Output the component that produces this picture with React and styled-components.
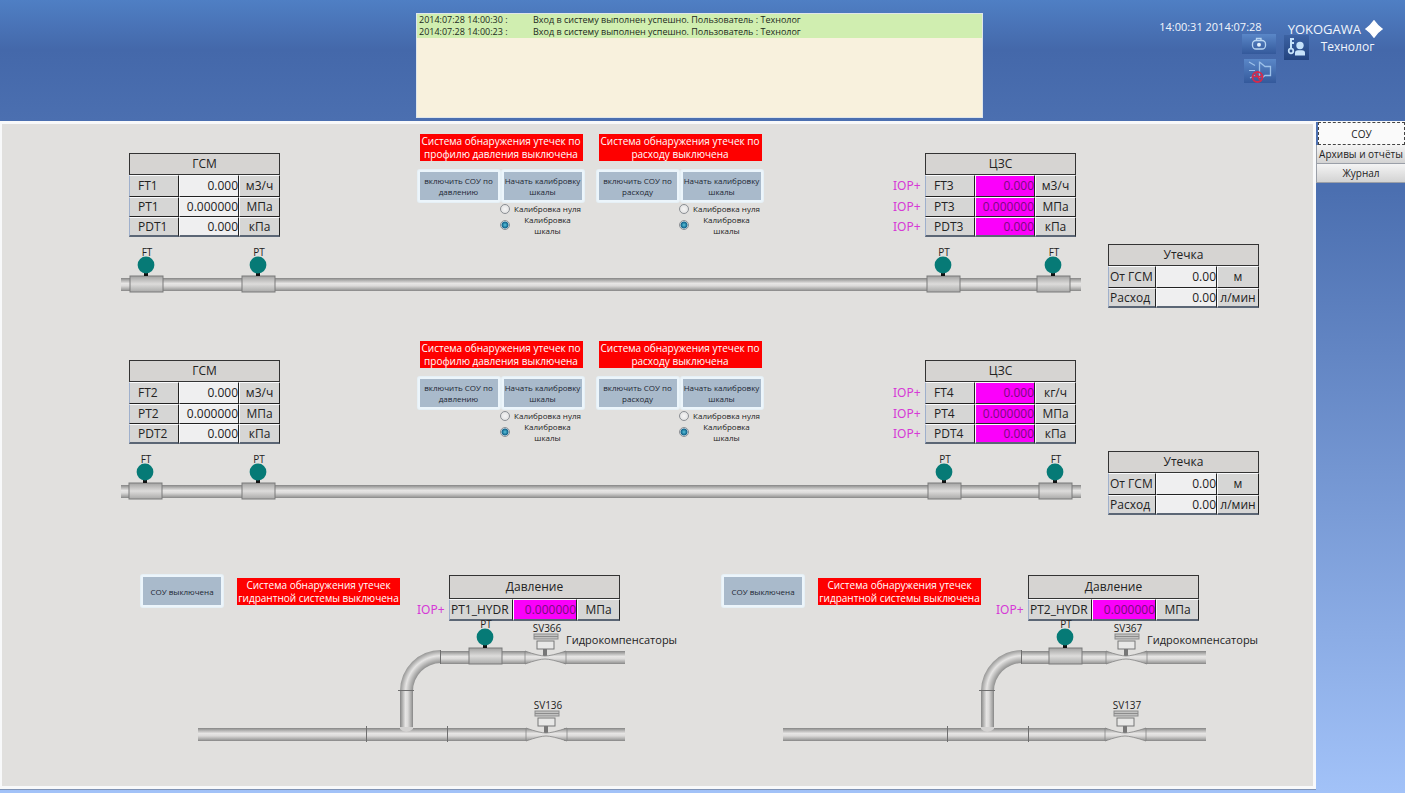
import React, { useState } from "react";
import styled, { createGlobalStyle, css } from "styled-components";

const GlobalStyle = createGlobalStyle`
  * {
    box-sizing: border-box;
  }
  body {
    margin: 0;
    font-family: "Open Sans", "Noto Sans", sans-serif;
    font-size: 12px;
    color: #222;
  }
  button, input {
    font-family: inherit;
  }
`;

const Page = styled.div`
  display: grid;
  grid-template-rows: 121px 1fr;
  min-height: 100vh;
  background: linear-gradient(#4f7fc4 0, #4468aa 50px, #4b6fb0 120px, #4b6fb0 190px, #a2c2f8 100%);
`;

const Header = styled.header`
  display: grid;
  grid-template-columns: 416fr 567px 422fr;
`;

const Log = styled.ul`
  grid-column: 2;
  margin: 13px 0 3px;
  padding: 0;
  list-style: none;
  background: #f8f1dd;
  border: 1px solid #dfe6ea;
  font-size: 9px;
`;

const LogRow = styled.li`
  display: flex;
  height: 12px;
  padding-left: 2px;
  line-height: 11px;
  background: #d0eeb0;
  color: #1c2a1c;
`;

const LogTime = styled.time`
  width: 114px;
`;

const HeaderTools = styled.div`
  display: flex;
  justify-content: flex-end;
  gap: 8px;
  padding: 20px 22px 0 0;
  color: #f2f6fc;
`;

const ToolColumn = styled.div`
  display: flex;
  flex-direction: column;
  align-items: flex-end;
`;

const Clock = styled.time`
  padding-right: 14px;
  font-size: 11px;
  line-height: 14px;
`;

const IconButton = styled.button`
  display: flex;
  align-items: center;
  justify-content: center;
  width: ${(p) => p.$w}px;
  height: ${(p) => p.$h}px;
  margin: 0 0 5px;
  padding: 0;
  border: 0;
  background: ${(p) => (p.$dark ? "linear-gradient(#3c62a3, #23447f)" : "linear-gradient(#5a87c8, #34599b)")};
  cursor: pointer;
`;

const Brand = styled.div`
  display: flex;
  align-items: center;
  gap: 4px;
  height: 15px;
  padding: 2px 0 0 4px;
  font-size: 13px;
`;

const UserRow = styled.div`
  display: flex;
  align-items: flex-start;
  gap: 12px;
  font-size: 12px;
  line-height: 24px;
`;

const Body = styled.div`
  display: flex;
`;

const Main = styled.main`
  flex: 1;
  margin-bottom: 4px;
  padding: 10px 54px 0 119px;
  border: solid #f8f9fa;
  border-width: 3px 3px 3px 2px;
  background: #e1e0de;
  box-shadow: 0 1px 0 #7f93b5;
`;

const Nav = styled.nav`
  display: flex;
  flex-direction: column;
  width: 89px;
  border-top: 1px solid #f8f9fa;
`;

const NavButton = styled.button`
  height: ${(p) => (p.$active ? 23 : 19)}px;
  padding: 0;
  border: 1px solid #9a9fa8;
  border-width: 0 0 1px 1px;
  background: linear-gradient(#f4f4f4, #d3d3d3);
  font-size: 10px;
  line-height: 16px;
  color: #222;
  white-space: nowrap;
  cursor: pointer;
  ${(p) =>
    p.$active &&
    css`
      margin: 0 0 0 2px;
      border: 1px dashed #444;
      background: #fafafa;
    `}
`;

const Line = styled.section`
  display: flex;
  gap: 27px;
  margin-bottom: 33px;
`;

const LineMain = styled.div`
  flex: 1;
`;

const LineTop = styled.div`
  display: grid;
  grid-template-columns: 151px 1fr 183px;
  height: 103px;
  padding: 0 5px 0 8px;
`;

const TableSlot = styled.div`
  padding-top: ${(p) => p.$top || 0}px;
`;

const Controls = styled.div`
  display: flex;
  justify-content: center;
  gap: 13px;
  padding-left: 7px;
`;

const Panel = styled.div`
  width: 166px;
`;

const Banner = styled.div`
  width: 163px;
  height: 27px;
  margin: ${(p) => p.$margin};
  background: #fe0000;
  color: #fff;
  font-size: 10px;
  line-height: 13px;
  text-align: center;
  white-space: pre-line;
  padding-top: 1px;
`;

const ButtonRow = styled.div`
  display: flex;
  gap: 2px;
`;

const PanelButton = styled.button`
  width: 82px;
  height: 32px;
  padding: 0;
  border: 2px solid #ecf5fb;
  border-radius: 2px;
  background: #a9bacb;
  box-shadow: 0 0 0 1px #e6f0f6;
  color: #1d2733;
  font-size: 8px;
  line-height: 11px;
  cursor: pointer;
`;

const RadioGroup = styled.fieldset`
  margin: 1px 0 0 82px;
  padding: 0 2px 0 0;
  border: 0;
`;

const RadioLabel = styled.label`
  display: flex;
  align-items: center;
  gap: 4px;
  font-size: 8px;
  line-height: 11px;
  text-align: center;
  white-space: pre;

  span {
    flex: 1;
  }
`;

const Radio = styled.input`
  appearance: none;
  width: 10px;
  height: 10px;
  margin: 0;
  border: 1px solid #8b8f94;
  border-radius: 50%;
  background: radial-gradient(#f5f5f5, #dcdcdc);

  &:checked {
    background: radial-gradient(#58c4dc 0, #12648c 3px, #e8eef2 4px);
  }
`;

const DataTable = styled.table`
  border-spacing: 0;
  table-layout: fixed;
  width: ${(p) => p.$width}px;
  line-height: 16px;
`;

const TitleCell = styled.th`
  height: ${(p) => (p.$tall ? 24 : 22)}px;
  padding: 0;
  border: 1px solid #333;
  background: #d6d4d2;
  font-weight: 400;
`;

const cell = css`
  height: 20px;
  padding: 0;
  border: 1px solid #fafbfd;
  border-right-color: #222;
  border-bottom-color: #222;
  background: #d6d6d5;
  font-weight: 400;
  white-space: nowrap;

  tr:first-child > & {
    height: 22px;
  }
  tr:last-child > & {
    border-bottom: 2px solid #5b6675;
  }
`;

const NameCell = styled.th`
  ${cell}
  padding-left: ${(p) => (p.$indent ? 8 : 1)}px;
  border-left: 1px solid #9fb0cc;
  text-align: left;
`;

const ValueCell = styled.td`
  ${cell}
  text-align: right;
  background: ${(p) => (p.$alarm ? "#fb00fb" : "#efeff0")};
  color: ${(p) => (p.$alarm ? "#780c7c" : "#222")};
`;

const UnitCell = styled.td`
  ${cell}
  text-align: center;
`;

const AlarmCell = styled.td`
  padding: 0;
  color: #d63ad6;
  font-family: "Noto Sans", sans-serif;
`;

const Drawing = styled.svg`
  display: block;
  width: ${(p) => p.$width || "100%"};
  height: auto;
  margin: ${(p) => p.$margin};
  overflow: visible;
`;

const Defs = styled.svg`
  display: block;
  width: 0;
  height: 0;
`;

const SvgText = styled.text`
  font-size: ${(p) => p.$size || 10}px;
  text-anchor: ${(p) => p.$anchor || "middle"};
  fill: #222;
`;

const Hydro = styled.section`
  display: grid;
  grid-template-columns: 1fr 1fr;
  gap: 46px;
  margin: 60px 2px 0 20px;
`;

const HydroHead = styled.div`
  display: flex;
  align-items: flex-start;
  padding-right: ${(p) => p.$right}px;
`;

const HydroTable = styled.div`
  margin-left: auto;
`;

const DataBlock = ({ title, rows, cols, alarm, indent, tall }) => {
  const width = cols.reduce((a, b) => a + b, 0) + (alarm ? 32 : 0);
  return (
    <DataTable $width={width}>
      <colgroup>
        {alarm && <col width="32" />}
        {cols.map((w, i) => (
          <col key={i} width={w} />
        ))}
      </colgroup>
      <thead>
        <tr>
          {alarm && <td />}
          <TitleCell colSpan={3} $tall={tall}>{title}</TitleCell>
        </tr>
      </thead>
      <tbody>
        {rows.map(([name, value, unit]) => (
          <tr key={name}>
            {alarm && <AlarmCell>IOP+</AlarmCell>}
            <NameCell scope="row" $indent={indent}>{name}</NameCell>
            <ValueCell $alarm={alarm}>{value}</ValueCell>
            <UnitCell>{unit}</UnitCell>
          </tr>
        ))}
      </tbody>
    </DataTable>
  );
};

const ControlPanel = ({ id, status, action }) => {
  const [mode, setMode] = useState("scale");
  return (
    <Panel>
      <Banner $margin="0 0 9px 2px">{status}</Banner>
      <ButtonRow>
        <PanelButton>{action}</PanelButton>
        <PanelButton>Начать калибровку шкалы</PanelButton>
      </ButtonRow>
      <RadioGroup>
        <RadioLabel>
          <Radio type="radio" name={id} checked={mode === "zero"} onChange={() => setMode("zero")} />
          <span>Калибровка нуля</span>
        </RadioLabel>
        <RadioLabel>
          <Radio type="radio" name={id} checked={mode === "scale"} onChange={() => setMode("scale")} />
          <span>{"Калибровка\nшкалы"}</span>
        </RadioLabel>
      </RadioGroup>
    </Panel>
  );
};

const stops = (
  <>
    <stop offset="0" stopColor="#858585" />
    <stop offset="0.12" stopColor="#a2a2a1" />
    <stop offset="0.42" stopColor="#e6e5e4" />
    <stop offset="0.6" stopColor="#dcdbda" />
    <stop offset="0.9" stopColor="#a0a09f" />
    <stop offset="1" stopColor="#858585" />
  </>
);

const PipeDefs = () => (
  <Defs aria-hidden="true">
    <defs>
      <linearGradient id="pipeH" x1="0" y1="0" x2="0" y2="1">{stops}</linearGradient>
      <linearGradient id="pipeV" x1="0" y1="0" x2="1" y2="0">{stops}</linearGradient>
      <linearGradient id="fitting" x1="0" y1="0" x2="0" y2="1">
        <stop offset="0" stopColor="#a3a3a2" />
        <stop offset="0.5" stopColor="#dddcdb" />
        <stop offset="1" stopColor="#a9a9a8" />
      </linearGradient>
      {/* outer radius 41, inner radius 28 */}
      <radialGradient id="bend" gradientUnits="userSpaceOnUse" cx="243" cy="70" r="42">
        <stop offset="0.64" stopColor="#858585" />
        <stop offset="0.7" stopColor="#a2a2a1" />
        <stop offset="0.84" stopColor="#e6e5e4" />
        <stop offset="0.96" stopColor="#a0a09f" />
        <stop offset="1" stopColor="#858585" />
      </radialGradient>
    </defs>
  </Defs>
);

const Sensor = ({ x, y, label }) => (
  <g>
    <rect x={x - 16} y={y + 11} width="33" height="16" fill="url(#fitting)" stroke="#7a7a7a" />
    <rect x={x - 2} y={y + 7} width="4" height="4" fill="#111" />
    <circle cx={x} cy={y} r="8.4" fill="#067a76" />
    <SvgText x={x + 1} y={y - 9}>{label}</SvgText>
  </g>
);

const Valve = ({ x, y, label }) => (
  <g>
    <SvgText x={x + 2} y={y - 25}>{label}</SvgText>
    <rect x={x - 11} y={y - 23} width="24" height="5" fill="#c2c2c1" stroke="#8b8b8b" />
    <path d={`M${x - 11} ${y - 20.5}h24`} stroke="#8b8b8b" />
    <rect x={x - 8} y={y - 16} width="17" height="8" fill="#e8e8e7" stroke="#777" />
    <rect x={x - 2} y={y - 8} width="4" height="8" fill="#777" />
    <path
      d={`M${x - 20} ${y - 6}Q${x - 6} ${y - 1} ${x} ${y - 1}T${x + 21} ${y - 6}V${y + 7}Q${x + 6} ${y + 2} ${x} ${y + 2}T${x - 20} ${y + 7}Z`}
      fill="url(#pipeH)"
      stroke="#858585"
      strokeWidth="0.8"
    />
  </g>
);

const Pipeline = ({ sensors }) => (
  <Drawing viewBox="0 0 960 48" $margin="9px 0 0">
    <rect x="0" y="32" width="960" height="13" fill="url(#pipeH)" />
    {sensors.map(([x, label]) => (
      <Sensor key={x} x={x} y={19} label={label} />
    ))}
  </Drawing>
);

const HydroPipes = ({ start, shift, valves }) => (
  <Drawing viewBox="0 0 478 124" $margin="0 0 0 57px" $width="calc(100% - 57px)">
    <rect x="242" y="30" width="86" height="13" fill="url(#pipeH)" />
    <rect x="366" y="30" width="61" height="13" fill="url(#pipeH)" />
    <path d="M243 29A41 41 0 0 0 202 70H215A28 28 0 0 1 243 42Z" fill="url(#bend)" />
    <rect x="202" y="69" width="13" height="39" fill="url(#pipeV)" />
    <rect x={start} y="107" width={328 - start} height="13" fill="url(#pipeH)" />
    <rect x="366" y="107" width="61" height="13" fill="url(#pipeH)" />
    <path d="M202 106H215V108Q208 114 202 108Z" fill="#d3d2d1" />
    <path d="M242.5 29V43M200 69.5H216M168.5 105V121M249.5 105V121" stroke="#6f6f6f" />
    <Sensor x={287 - shift} y={16} label="PT" />
    <Valve x={347} y={36} label={valves[0]} />
    <Valve x={348 - shift * 2} y={113} label={valves[1]} />
    <SvgText x="368" y="23" $anchor="start" $size={11}>Гидрокомпенсаторы</SvgText>
  </Drawing>
);

const lines = [
  {
    n: 1,
    left: [["FT1", "0.000", "м3/ч"], ["PT1", "0.000000", "МПа"], ["PDT1", "0.000", "кПа"]],
    right: [["FT3", "0.000", "м3/ч"], ["PT3", "0.000000", "МПа"], ["PDT3", "0.000", "кПа"]],
    sensors: [[25, "FT"], [137, "PT"], [822, "PT"], [932, "FT"]],
  },
  {
    n: 2,
    left: [["FT2", "0.000", "м3/ч"], ["PT2", "0.000000", "МПа"], ["PDT2", "0.000", "кПа"]],
    right: [["FT4", "0.000", "кг/ч"], ["PT4", "0.000000", "МПа"], ["PDT4", "0.000", "кПа"]],
    sensors: [[24, "FT"], [137, "PT"], [823, "PT"], [934, "FT"]],
  },
];

const hydro = [
  { name: "PT1_HYDR", start: 0, shift: 0, right: 56, valves: ["SV366", "SV136"] },
  { name: "PT2_HYDR", start: 4, shift: 1, right: 58, valves: ["SV367", "SV137"] },
];

const log = ["2014:07:28 14:00:30 :", "2014:07:28 14:00:23 :"];

const CameraIcon = () => (
  <svg width="16" height="14" viewBox="0 0 16 14" fill="none" stroke="#b9d6f2" strokeWidth="1.3">
    <rect x="1.5" y="3.5" width="13" height="8.5" rx="3.5" />
    <path d="M5.5 3.5V1.5H10V3.5" />
    <circle cx="8" cy="7.7" r="2" fill="#e4f1fc" stroke="none" />
  </svg>
);

const SoundIcon = () => (
  <svg width="28" height="24" viewBox="0 0 28 24" fill="none">
    <path d="M13.5 2.5V19M13.500 3L19 7.500H24.500V16.500H19L16 19" stroke="#9cc0e8" strokeWidth="1.3" />
    <path d="M3 3L9 6.500M3 11.500H9M4 19L9 16.500" stroke="#9cc0e8" strokeWidth="1.2" />
    <circle cx="11.500" cy="18" r="5" stroke="#d42a4c" strokeWidth="1.8" />
    <path d="M7 17.500H16M10 14.500L14 21" stroke="#d42a4c" strokeWidth="1.6" />
  </svg>
);

const UserKeyIcon = () => (
  <svg width="21" height="21" viewBox="0 0 21 21" fill="#c6e2fa">
    <circle cx="5" cy="14" r="2.3" fill="none" stroke="#c6e2fa" strokeWidth="1.7" />
    <path d="M4 1H8V3H6V5H8V7H6V12H4Z" />
    <circle cx="14" cy="8.5" r="3.7" />
    <path d="M9 18.500V16Q9 13.300 12 13.300H16Q19 13.300 19 16V18.500Z" />
  </svg>
);

const App = () => {
  return (
    <Page>
      <GlobalStyle />
      <Header>
        <Log>
          {log.map((time) => (
            <LogRow key={time}>
              <LogTime>{time}</LogTime>
              <span>Вход в систему выполнен успешно. Пользователь : Технолог</span>
            </LogRow>
          ))}
        </Log>
        <HeaderTools>
          <ToolColumn>
            <Clock>14:00:31 2014:07:28</Clock>
            <IconButton $w={34} $h={20} aria-label="Снимок экрана"><CameraIcon /></IconButton>
            <IconButton $w={32} $h={24} aria-label="Отключить звук"><SoundIcon /></IconButton>
          </ToolColumn>
          <div>
            <Brand>
              YOKOGAWA
              <svg width="18" height="18" viewBox="0 0 18 18" aria-hidden="true">
                <path d="M9 1Q12 5.500 17 9Q12 12.500 9 17Q6 12.500 1 9Q6 5.500 9 1Z" fill="#fff" stroke="#fff" strokeWidth="1.5" />
              </svg>
            </Brand>
            <UserRow>
              <IconButton $w={25} $h={25} $dark aria-label="Пользователь"><UserKeyIcon /></IconButton>
              Технолог
            </UserRow>
          </div>
        </HeaderTools>
      </Header>
      <Body>
        <Main>
          <PipeDefs />
          {lines.map((line) => (
            <Line key={line.n}>
              <LineMain>
                <LineTop>
                  <TableSlot $top={19}>
                    <DataBlock title="ГСМ" rows={line.left} cols={[50, 60, 41]} indent />
                  </TableSlot>
                  <Controls>
                    <ControlPanel
                      id={`pressure${line.n}`}
                      status={"Система обнаружения утечек по\nпрофилю давления выключена"}
                      action="включить СОУ по давлению"
                    />
                    <ControlPanel
                      id={`flow${line.n}`}
                      status={"Система обнаружения утечек по\nрасходу выключена"}
                      action="включить СОУ по расходу"
                    />
                  </Controls>
                  <TableSlot $top={19}>
                    <DataBlock title="ЦЗС" rows={line.right} cols={[50, 60, 41]} alarm indent />
                  </TableSlot>
                </LineTop>
                <Pipeline sensors={line.sensors} />
              </LineMain>
              <TableSlot $top={110}>
                <DataBlock
                  title="Утечка"
                  rows={[["От ГСМ", "0.00", "м"], ["Расход", "0.00", "л/мин"]]}
                  cols={[48, 61, 42]}
                />
              </TableSlot>
            </Line>
          ))}
          <Hydro>
            {hydro.map((h) => (
              <div key={h.name}>
                <HydroHead $right={h.right}>
                  <PanelButton>СОУ выключена</PanelButton>
                  <Banner $margin="3px 0 0 14px">{"Система обнаружения утечек\nгидрантной системы выключена"}</Banner>
                  <HydroTable>
                    <DataBlock title="Давление" rows={[[h.name, "0.000000", "МПа"]]} cols={[64, 64, 43]} alarm tall />
                  </HydroTable>
                </HydroHead>
                <HydroPipes start={h.start} shift={h.shift} valves={h.valves} />
              </div>
            ))}
          </Hydro>
        </Main>
        <Nav>
          <NavButton $active>СОУ</NavButton>
          <NavButton>Архивы и отчёты</NavButton>
          <NavButton>Журнал</NavButton>
        </Nav>
      </Body>
    </Page>
  );
};

export default App;
